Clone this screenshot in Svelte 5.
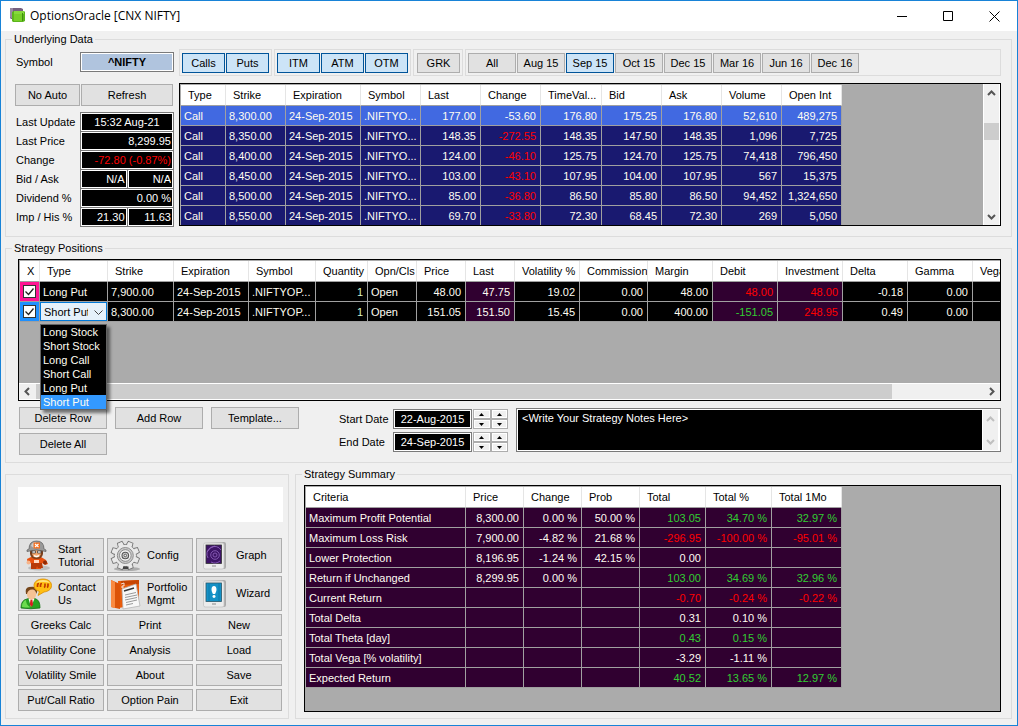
<script>
  const MOODS = { r: 'neg', g: 'pos' };

  const quoteCols = [
    ['Type', 45], ['Strike', 60], ['Expiration', 75], ['Symbol', 60], ['Last', 60], ['Change', 60],
    ['TimeVal...', 61], ['Bid', 60], ['Ask', 60], ['Volume', 60], ['Open Int', 60]
  ];
  const quotes = [
    ['8,300.00', '177.00', '-53.60', '176.80', '175.25', '176.80', '52,610', '489,275'],
    ['8,350.00', '148.35', '-272.55', '148.35', '147.50', '148.35', '1,096', '7,725'],
    ['8,400.00', '124.00', '-46.10', '125.75', '124.70', '125.75', '74,418', '796,450'],
    ['8,450.00', '103.00', '-43.10', '107.95', '104.00', '107.95', '567', '15,375'],
    ['8,500.00', '85.00', '-36.80', '86.50', '85.80', '86.50', '94,452', '1,324,650'],
    ['8,550.00', '69.70', '-33.80', '72.30', '68.45', '72.30', '269', '5,050']
  ];

  const posCols = [
    ['X', 20], ['Type', 68], ['Strike', 66], ['Expiration', 75], ['Symbol', 67], ['Quantity', 52],
    ['Opn/Cls', 49], ['Price', 49], ['Last', 49], ['Volatility %', 65], ['Commission', 68],
    ['Margin', 65], ['Debit', 65], ['Investment', 65], ['Delta', 65], ['Gamma', 65], ['Vega', 65]
  ];
  const positions = [
    { type: 'Long Put', strike: '7,900.00', price: '48.00', last: '47.75', vol: '19.02', margin: '48.00', debit: '48.00', inv: '48.00', delta: '-0.18' },
    { type: 'Short Put', strike: '8,300.00', price: '151.05', last: '151.50', vol: '15.45', margin: '400.00', debit: '-151.05', inv: '248.95', delta: '0.49' }
  ];
  const types = ['Long Stock', 'Short Stock', 'Long Call', 'Short Call', 'Long Put', 'Short Put'];

  const sumCols = [['Criteria', 160], ['Price', 58], ['Change', 58], ['Prob', 58], ['Total', 66], ['Total %', 66], ['Total 1Mo', 70]];
  const summary = [
    ['g', 'Maximum Profit Potential', '8,300.00', '0.00 %', '50.00 %', '103.05', '34.70 %', '32.97 %'],
    ['r', 'Maximum Loss Risk', '7,900.00', '-4.82 %', '21.68 %', '-296.95', '-100.00 %', '-95.01 %'],
    ['', 'Lower Protection', '8,196.95', '-1.24 %', '42.15 %', '0.00', '', ''],
    ['g', 'Return if Unchanged', '8,299.95', '0.00 %', '', '103.00', '34.69 %', '32.96 %'],
    ['r', 'Current Return', '', '', '', '-0.70', '-0.24 %', '-0.22 %'],
    ['', 'Total Delta', '', '', '', '0.31', '0.10 %', ''],
    ['g', 'Total Theta [day]', '', '', '', '0.43', '0.15 %', ''],
    ['', 'Total Vega [% volatility]', '', '', '', '-3.29', '-1.11 %', ''],
    ['g', 'Expected Return', '', '', '', '40.52', '13.65 %', '12.97 %']
  ];

  const actions = [
    'Greeks Calc', 'Print', 'New', 'Volatility Cone', 'Analysis', 'Load',
    'Volatility Smile', 'About', 'Save', 'Put/Call Ratio', 'Option Pain', 'Exit'
  ];
  const months = ['All', 'Aug 15', 'Sep 15', 'Oct 15', 'Dec 15', 'Mar 16', 'Jun 16', 'Dec 16'];

  let month = $state('Sep 15');
  let on = $state({ Calls: true, Puts: true, ITM: true, ATM: true, OTM: true, GRK: false });
  let picked = $state('Short Put');

  const total = (cols) => cols.reduce((sum, c) => sum + c[1], 0);
</script>

{#snippet columns(cols)}
  <colgroup>{#each cols as c}<col style="width:{c[1]}px" />{/each}</colgroup>
  <thead><tr>{#each cols as c}<th scope="col">{c[0]}</th>{/each}</tr></thead>
{/snippet}

{#snippet toggle(name)}
  <button class="btn opt" class:on={on[name]} aria-pressed={on[name]} onclick={() => (on[name] = !on[name])}>{name}</button>
{/snippet}

{#snippet chevron(dir)}
  <svg class="chev {dir}" viewBox="0 0 9 9" aria-hidden="true"><path d="M1 6 4.500 2.500 8 6" fill="none" stroke="currentColor" stroke-width="2" /></svg>
{/snippet}

{#snippet spinner(label)}
  <span class="spin">
    <button aria-label="{label} up"><svg viewBox="0 0 5 3"><path d="M0 3 2.500 0 5 3z" /></svg></button>
    <button aria-label="{label} down"><svg viewBox="0 0 5 3"><path d="M0 0 2.500 3 5 0z" /></svg></button>
  </span>
{/snippet}

<div class="window">
  <header class="titlebar">
    <svg class="logo" viewBox="0 0 16 16" aria-hidden="true">
      <path d="M0 0h11l2 1v10H1L0 10z" fill="#75607f" /><path d="M0 0h3v10l-2 0-1-1z" fill="#9a8aa3" />
      <path d="M2 4l2-1h10l1 1v9l-2 1H3l-1-1z" fill="#5cb51d" /><path d="M4 3h10v3H4z" fill="#86d93c" /><path d="M4 6h8v7H4z" fill="#77d029" /><path d="M12 5h1v8h-1z" fill="#3f8f0e" />
    </svg>
    <h1>OptionsOracle [CNX NIFTY]</h1>
    <div class="winctl">
      <button aria-label="Minimize"><svg viewBox="0 0 11 11"><path d="M0 5.500h10" /></svg></button>
      <button aria-label="Maximize"><svg viewBox="0 0 11 11"><path d="M.5.500h9v9h-9z" /></svg></button>
      <button aria-label="Close"><svg viewBox="0 0 11 11"><path d="M.5.500l10 10M10.500.500l-10 10" /></svg></button>
    </div>
  </header>

  <main>
    <fieldset>
      <legend>Underlying Data</legend>
      <div class="underlying">
        <div class="side">
          <div class="pair">
            <label for="symbol">Symbol</label>
            <div class="cells"><input id="symbol" class="symbol" value="^NIFTY" /></div>
          </div>
          <div class="refresh">
            <button class="btn">No Auto</button>
            <button class="btn">Refresh</button>
          </div>
          <div class="pair">
            <div class="labels">
              <label for="upd">Last Update</label><label for="lp">Last Price</label><label for="chg">Change</label>
              <label for="bid">Bid / Ask</label><label for="div">Dividend %</label><label for="imp">Imp / His %</label>
            </div>
            <div class="cells two">
              <input id="upd" class="wide mid" value="15:32 Aug-21" readonly />
              <input id="lp" class="wide" value="8,299.95" readonly />
              <input id="chg" class="wide neg" value="-72.80 (-0.87%)" readonly />
              <input id="bid" value="N/A" readonly /><input aria-label="Ask" value="N/A" readonly />
              <input id="div" class="wide" value="0.00 %" readonly />
              <input id="imp" value="21.30" readonly /><input aria-label="Historical volatility" value="11.63" readonly />
            </div>
          </div>
        </div>

        <div class="market">
          <div class="toolbar">
            <div class="tools">{@render toggle('Calls')}{@render toggle('Puts')}</div>
            <div class="tools">{@render toggle('ITM')}{@render toggle('ATM')}{@render toggle('OTM')}</div>
            <div class="tools single">{@render toggle('GRK')}</div>
            <div class="tools fill">
              {#each months as m}
                <button class="btn opt month" class:on={month === m} aria-pressed={month === m} onclick={() => (month = m)}>{m}</button>
              {/each}
            </div>
          </div>
          <div class="grid quotes">
            <div class="view">
              <table style="width:{total(quoteCols)}px">
                {@render columns(quoteCols)}
                <tbody>
                  {#each quotes as q, i}
                    <tr class:sel={i === 0}>
                      <td>Call</td><td>{q[0]}</td><td>24-Sep-2015</td><td>.NIFTYO...</td>
                      <td class="num">{q[1]}</td><td class="num" class:neg={i > 0}>{q[2]}</td>
                      {#each q.slice(3) as v}<td class="num">{v}</td>{/each}
                    </tr>
                  {/each}
                </tbody>
              </table>
            </div>
            <div class="vbar">{@render chevron('up')}<i class="thumb"></i>{@render chevron('down')}</div>
          </div>
        </div>
      </div>
    </fieldset>

    <fieldset>
      <legend>Strategy Positions</legend>
      <div class="strategy">
        <div class="grid positions">
          <div class="view">
            <table style="width:{total(posCols)}px">
              {@render columns(posCols)}
              <tbody>
                {#each positions as p, i}
                  <tr>
                    <td class="tick" class:blue={i === 1}><input type="checkbox" checked aria-label="Include {p.type}" /></td>
                    {#if i === 1}
                      <td class="combo">
                        <select bind:value={picked} aria-label="Position type">{#each types as t}<option>{t}</option>{/each}</select>
                        <svg viewBox="0 0 9 5" aria-hidden="true"><path d="M.5.500l4 4 4-4" fill="none" stroke="#444" /></svg>
                      </td>
                    {:else}
                      <td>{p.type}</td>
                    {/if}
                    <td>{p.strike}</td><td>24-Sep-2015</td><td>.NIFTYOP...</td>
                    <td class="num qty">1</td><td>Open</td>
                    <td class="num">{p.price}</td><td class="num plum">{p.last}</td><td class="num">{p.vol}</td>
                    <td class="num">0.00</td><td class="num">{p.margin}</td>
                    <td class="num plum {i ? 'pos' : 'neg'}">{p.debit}</td><td class="num plum neg">{p.inv}</td>
                    <td class="num">{p.delta}</td><td class="num">0.00</td><td></td>
                  </tr>
                {/each}
              </tbody>
            </table>
          </div>
          <div class="hbar">{@render chevron('left')}<i class="thumb"></i>{@render chevron('right')}</div>
          <ul class="menu">
            {#each types as t}
              <li><button class:cur={t === picked} onclick={() => (picked = t)}>{t}</button></li>
            {/each}
          </ul>
        </div>

        <div class="below">
          <div class="rowbtns">
            <button class="btn">Delete Row</button><button class="btn">Add Row</button><button class="btn">Template...</button>
            <button class="btn">Delete All</button>
          </div>
          <div class="dates">
            <label for="start">Start Date</label>
            <div class="cells"><input id="start" class="mid" value="22-Aug-2015" /></div>
            <div class="spins">{@render spinner('Start day')}{@render spinner('Start month')}</div>
            <label for="end">End Date</label>
            <div class="cells"><input id="end" class="mid" value="24-Sep-2015" /></div>
            <div class="spins">{@render spinner('End day')}{@render spinner('End month')}</div>
          </div>
          <div class="notes">
            <textarea aria-label="Strategy notes" value="<Write Your Strategy Notes Here>"></textarea>
            <div class="vbar off">{@render chevron('up')}{@render chevron('down')}</div>
          </div>
        </div>
      </div>
    </fieldset>

    <div class="bottom">
      <section class="panel">
        <div class="banner"></div>
        <div class="actions">
          <button class="btn big">
            <svg viewBox="0 0 32 32" aria-hidden="true">
              <ellipse cx="19" cy="28" rx="11" ry="2.500" fill="#999" opacity=".5" />
              <path d="M11 17q5-3 10 0l5 3 2 4-3 1-3-2-1 6H12l-1-6-3 1-1-5z" fill="#e8500f" />
              <path d="M11 23h11l1 5h-5l-1-2-1 3h-5z" fill="#b73a08" />
              <circle cx="8.500" cy="22.500" r="2" fill="#f6b48a" /><circle cx="25" cy="22.500" r="2" fill="#8d2b06" />
              <path d="M14 20h5v3h-5z" fill="#ffd9c2" />
              <path d="M10 9h13v5q-1 5-6.500 5T10 14z" fill="#7a3f1c" />
              <ellipse cx="16.500" cy="13" rx="4.500" ry="4.500" fill="#f3a870" />
              <path d="M12 11h3.500v2H12zM17.500 11H21v2h-3.500z" fill="#fff" stroke="#333" stroke-width=".7" />
              <path d="M14 15.500q2.500 2 5 0" stroke="#fff" stroke-width="1.400" fill="none" />
              <path d="M9 9Q9 1 16.500 1T24 9l2 1v1.500q-9.500-3-19 0V10z" fill="#999" stroke="#5d5d5d" stroke-width=".7" />
              <path d="M11 6q1-4 5-4l-2 6z" fill="#ccc" />
              <path d="M13.500 2.500h6.500v6h-6.500z" fill="#f37021" /><path d="M15 4l3.500 3m0-3L15 7" stroke="#fff" stroke-width="1.200" />
            </svg>
            <span>Start<br />Tutorial</span>
          </button>
          <button class="btn big">
            <svg viewBox="0 0 32 32" aria-hidden="true">
              <ellipse cx="18" cy="29" rx="13" ry="2" fill="#777" opacity=".5" />
              <g fill="#ddd" stroke="#777" stroke-width=".9">
                {#each [22, 67, 112, 157, 202, 247, 292, 337] as a}
                  <path d="M12.800 7 13.800 1.200h5L19.800 7z" transform="rotate({a} 16.300 15.500)" />
                {/each}
                <circle cx="16.300" cy="15.500" r="11" />
              </g>
              <g fill="#e9e9e9">
                {#each [22, 67, 112, 157, 202, 247, 292, 337] as a}
                  <path d="M13.600 7 14.400 1.900h3.900L19 7z" transform="rotate({a} 16.300 15.500)" />
                {/each}
                <circle cx="16.300" cy="15.500" r="10.500" />
              </g>
              <circle cx="16.300" cy="15.500" r="8" fill="#c9c9c9" stroke="#8f8f8f" />
              <circle cx="16.300" cy="15.500" r="5.800" fill="#f3f3f3" stroke="#777" stroke-width=".8" />
              <circle cx="16.300" cy="15.500" r="3.300" fill="#ccc" stroke="#555" stroke-width="1.100" />
              <circle cx="16.300" cy="15.500" r="1.300" fill="#eee" stroke="#444" stroke-width=".8" />
              <path d="M14 26.500h5.500v2.500H14z" fill="#444" />
            </svg>
            <span>Config</span>
          </button>
          <button class="btn big">
            <svg viewBox="0 0 32 32" aria-hidden="true">
              <path d="M7 3 26 2q2 0 2 2v23q0 2-2 2H8q-2 0-2-2z" fill="#aaa" />
              <rect x="5.500" y="3" width="20.500" height="26" rx="1.800" fill="#ececec" stroke="#c4c4c4" stroke-width=".8" />
              <rect x="8" y="5" width="15.500" height="18.500" fill="#3d1466" stroke="#333" stroke-width=".8" />
              <g fill="none" stroke="#8a5fb8" stroke-width=".9"><circle cx="17" cy="15" r="2" /><circle cx="17" cy="15" r="4.300" /><path d="M10 18a7.500 7.500 0 0 1 13-8M13 22a8 8 0 0 0 9-1M9 12q3-5 8-6" /></g>
              <path d="M14 26h4" stroke="#888" />
            </svg>
            <span>Graph</span>
          </button>
          <button class="btn big">
            <svg viewBox="0 0 32 32" aria-hidden="true">
              <path d="M1 30q0-8 6-9l3-1h3l3 1q4 1.500 4 9-9 1.500-19 0z" fill="#26a321" stroke="#137013" stroke-width=".8" />
              <path d="M4 23q-2 2-2 6 7 1 8 0-4-2-4-7z" fill="#6cdb4f" />
              <path d="M8.500 20.500 11 29l3.500-8.500z" fill="#fff" /><path d="M10.500 21.500h1.800l.8 5-1.700 2.500-1.600-2.500z" fill="#d42020" />
              <ellipse cx="11.500" cy="16" rx="4.700" ry="5.500" fill="#f6c295" />
              <path d="M6 16q-1.500-6 3-7 8-1.500 8 3 .5 2-.8 4-.3-4-3.200-4.500Q8 11 7 16z" fill="#75451a" />
              <path d="M23 1c5 0 8.500 2.500 8.500 6.500S28 13.500 24 14l-6 3.500 1.500-4Q14 12 14 7.500C14 3.500 18 1 23 1z" fill="#ffbe12" stroke="#d98a00" stroke-width=".8" />
              <path d="M16 5q2-3 7-3t7 3q-7-2-14 0z" fill="#ffe27a" />
              <path d="M17.500 9V7q0-1.500 1.500-1.500M20.500 9V7q0-1.500 1.500-1.500M25 5.500v2Q25 9 24 9.500M28 5.500v2Q28 9 27 9.500" stroke="#c03a00" stroke-width="1.700" fill="none" />
            </svg>
            <span>Contact<br />Us</span>
          </button>
          <button class="btn big">
            <svg viewBox="0 0 32 32" aria-hidden="true">
              <path d="M9 3l21-1v24L10 30z" fill="#e85c0c" /><path d="M12 3l18-1v4l-18 1z" fill="#c84603" />
              <path d="M2 2l9 4v25l-9-2z" fill="#dc5408" /><path d="M2 2l4 2v26l-4-1z" fill="#f98a40" />
              <path d="M12 6l3-1v3h-2v2h2" stroke="#fff" fill="none" stroke-width=".8" />
              <path d="M13 11l14-5 4 22-17 3z" fill="#f8f8f8" stroke="#b5b5b5" stroke-width=".8" />
              <path d="M15 13l10-3" stroke="#333" stroke-width="1.500" />
              <path d="M16 17l11-2.500M16 19.500l12-2.500M16 22l12-2.500M17 24.500l11-2.500M17 27l7-1.500" stroke="#999" stroke-width="1" />
            </svg>
            <span>Portfolio<br />Mgmt</span>
          </button>
          <button class="btn big">
            <svg viewBox="0 0 32 32" aria-hidden="true">
              <path d="M7 3 26 2q2 0 2 2v23q0 2-2 2H8q-2 0-2-2z" fill="#aaa" />
              <rect x="5.500" y="3" width="20.500" height="26" rx="1.800" fill="#ececec" stroke="#c4c4c4" stroke-width=".8" />
              <rect x="8" y="5" width="15.500" height="18.500" fill="#1591c6" stroke="#2b5566" stroke-width=".8" />
              <path d="M11 5v18M21 5v18" stroke="#0c7bab" /><path d="M16 8c1.700 0 2.500 1.500 2.500 3.500s-1.200 3.500-1.400 4.500h-2.200c-.2-1-1.400-2.500-1.400-4.500S14.300 8 16 8z" fill="#fff" />
              <ellipse cx="16" cy="18.500" rx="1.500" ry="1.400" fill="#fff" /><path d="M14 26h4" stroke="#888" />
            </svg>
            <span>Wizard</span>
          </button>
          {#each actions as a}<button class="btn">{a}</button>{/each}
        </div>
      </section>

      <fieldset>
        <legend>Strategy Summary</legend>
        <div class="summary">
          <div class="grid totals">
            <div class="view">
              <table style="width:{total(sumCols)}px">
                {@render columns(sumCols)}
                <tbody>
                  {#each summary as [mood, name, ...vals]}
                    <tr>
                      <td>{name}</td>
                      {#each vals as v, j}<td class="num {j > 2 ? (MOODS[mood] ?? '') : ''}">{v}</td>{/each}
                    </tr>
                  {/each}
                </tbody>
              </table>
            </div>
          </div>
        </div>
      </fieldset>
    </div>
  </main>
</div>

<style>
  :global(body) { margin: 0; background: #f0f0f0; }
  * { box-sizing: border-box; }
  .window {
    min-height: 100vh; display: flex; flex-direction: column;
    border: 1px solid #1883d7; background: #f0f0f0; color: #000;
    font: 11px/13px "Liberation Sans", Arial, sans-serif;
  }
  button, input, select, textarea { font: inherit; color: inherit; margin: 0; border-radius: 0; }
  button { cursor: default; }
  svg { display: block; flex: none; }

  .titlebar { display: flex; align-items: center; height: 30px; padding-left: 9px; background: #fff; }
  .logo { width: 16px; height: 16px; }
  h1 { margin: 0 0 0 4px; flex: 1; font: 12px/16px "Open Sans", "Noto Sans", sans-serif; }
  .winctl { display: flex; height: 100%; }
  .winctl button { width: 46px; padding: 0; border: 0; background: none; display: grid; place-items: center; }
  .winctl svg { width: 11px; height: 11px; fill: none; stroke: #000; stroke-width: 1; }

  main { flex: 1; display: flex; flex-direction: column; gap: 5px; padding: 2px 5px 6px 4px; }
  fieldset { margin: 0; padding: 0; min-width: 0; border: 1px solid #dcdcdc; }
  legend { margin-left: 6px; padding: 0 2px; height: 13px; }

  .btn { padding: 0; height: 22px; border: 1px solid #adadad; background: #e1e1e1; text-align: center; white-space: nowrap; }
  .neg { color: #f00; }
  .pos { color: #32cd32; }

  .underlying { display: grid; grid-template-columns: 159px minmax(0, 1fr); gap: 5px; padding: 3px 10px 9px 9px; }
  .side { padding-top: 3px; }
  .pair { display: grid; grid-template-columns: 65px 1fr; }
  .pair > label { padding-left: 1px; line-height: 20px; }
  .labels { display: grid; grid-auto-rows: 19px; padding-left: 1px; line-height: 20px; }
  .refresh { display: grid; grid-template-columns: 65px 1fr; gap: 1px; margin: 12px 1px 6px 0; }
  .cells { display: grid; gap: 1px; padding: 1px; background: #7a7a7a; }
  .cells.two { grid-template-columns: 1fr 1fr; }
  .cells input {
    width: 100%; min-width: 0; height: 18px; padding: 0 1px; border: 1px solid #fff;
    background: #000; color: #fff; text-align: right; outline: 0;
  }
  .cells .wide { grid-column: 1 / -1; }
  .cells .mid { text-align: center; }
  .cells .neg { color: #f00; }
  .cells .symbol { background: #b0c4de; color: #000; font-weight: bold; text-align: center; }

  .toolbar { display: flex; gap: 2px; margin-bottom: 7px; }
  .tools { display: flex; gap: 1px; height: 27px; padding: 3px 2px; border: 1px solid #dcdcdc; }
  .tools.single { padding-left: 3px; }
  .tools.fill { flex: 1; }
  .opt { width: 43px; height: 20px; }
  .month { width: 48px; }
  .on { background: #cce4f7; border-color: #005499; }

  .grid { position: relative; display: flex; border: 1px solid #000; background: #ababab; }
  .view { flex: 1; min-width: 0; overflow: hidden; padding: 1px 0 0 1px; }
  .quotes { height: 143px; }
  .positions { height: 142px; flex-direction: column; }
  .totals { height: 227px; }
  table { table-layout: fixed; border-collapse: separate; border-spacing: 0; }
  th, td { padding: 0; white-space: nowrap; overflow: hidden; border: 0 solid #a0a0a0; border-width: 0 1px 1px 0; }
  th { height: 21px; padding: 0 0 0 7px; background: #fff; font-weight: normal; text-align: left; border-right-color: #e5e5e5; }
  td { height: 20px; padding: 1px 4px 0 3px; color: #fffdf2; }
  td.num { text-align: right; }
  td.neg { color: #f00; }
  td.pos { color: #32cd32; }
  .quotes td { background: #191970; }
  .quotes .sel td { background: #4169e1; }
  .positions td { background: #000; }
  .positions td.plum, .totals td { background: #300030; }
  .positions td.qty { color: #d8f5c8; }

  .positions td.tick { padding: 0 0 0 3px; background: #ff1493; }
  .positions td.blue { background: #1e90ff; }
  .tick input {
    display: block; appearance: none; width: 13px; height: 13px; border: 1px solid #333;
    background: #fff url("data:image/svg+xml,%3Csvg xmlns='http://www.w3.org/2000/svg' viewBox='0 0 11 11'%3E%3Cpath d='M1.500 5.500l3 3 5-6' fill='none' stroke='%23222' stroke-width='1.300'/%3E%3C/svg%3E");
  }
  .positions td.combo { position: relative; padding: 0; }
  .combo select {
    display: block; appearance: none; width: 100%; height: 19px; padding: 1px 18px 0 3px;
    border: 1px solid #0078d7; background: #e5f1fb; color: #000; outline: 0;
  }
  .combo svg { position: absolute; right: 4px; top: 8px; width: 9px; height: 5px; }
  .menu {
    position: absolute; left: 21px; top: 64px; width: 67px; margin: 0; padding: 0; list-style: none;
    border: 1px solid #646464; background: #000; box-shadow: 3px 3px 3px rgba(0, 0, 0, .5);
  }
  .menu li { display: block; }
  .menu button { display: block; width: 100%; height: 14px; padding: 0 0 0 2px; border: 0; background: none; color: #fffdf2; text-align: left; white-space: nowrap; }
  .menu .cur { background: #3399ff; }

  .chev { width: 9px; height: 9px; color: #555; }
  .down { transform: rotate(180deg); }
  .left { transform: rotate(-90deg); }
  .right { transform: rotate(90deg); }
  .vbar, .hbar { display: flex; align-items: center; justify-content: space-between; background: #f0f0f0; }
  .vbar { flex: none; width: 17px; flex-direction: column; padding: 5px 0 4px; border-left: 1px solid #fff; border-right: 1px solid #fff; }
  .vbar .thumb { width: 100%; height: 17px; margin: 25px 0 auto; background: #cdcdcd; }
  .hbar { flex: none; height: 17px; padding: 0 4px; gap: 4px; border-top: 1px solid #fff; border-bottom: 1px solid #fff; }
  .hbar .thumb { width: 88%; height: 15px; margin-right: auto; background: #cdcdcd; }
  .off .chev { color: #bfbfbf; }

  .strategy { padding: 4px 10px 7px 12px; }
  .below { display: flex; align-items: flex-start; margin-top: 6px; padding-left: 1px; }
  .rowbtns { display: grid; grid-template-columns: repeat(3, 88px); gap: 4px 8px; }
  .dates { display: grid; grid-template-columns: 54px 79px 36px; row-gap: 3px; margin: 2px 8px 0 40px; line-height: 20px; }
  .spins { display: flex; margin-left: 1px; }
  .spin { flex: 1; display: flex; flex-direction: column; }
  .spin button { flex: 1; min-height: 0; padding: 0; display: grid; place-items: center; border: 1px solid #adadad; background: #f0f0f0; box-shadow: inset 0 0 0 1px #fff; }
  .spin svg { width: 5px; height: 3px; }
  .notes { flex: 1; display: flex; height: 44px; margin-top: 1px; border: 1px solid #7a7a7a; background: #fff; padding: 1px; }
  .notes textarea { flex: 1; min-width: 0; padding: 2px 4px; border: 0; resize: none; background: #000; color: #fff; overflow: hidden; outline: 0; }

  .bottom { flex: 1; display: grid; grid-template-columns: 284px minmax(0, 1fr); gap: 6px; }
  .panel { margin-top: 6px; padding: 12px 5px 6px 12px; border: 1px solid #dcdcdc; }
  .banner { height: 35px; margin-bottom: 16px; background: #fff; }
  .actions { display: grid; grid-template-columns: repeat(3, 86px); gap: 3px; }
  .big { display: flex; align-items: center; gap: 6px; height: 35px; padding: 0 1px; text-align: left; }
  .big svg { width: 32px; height: 32px; }
  .summary { padding: 4px 10px 6px 8px; }
</style>
